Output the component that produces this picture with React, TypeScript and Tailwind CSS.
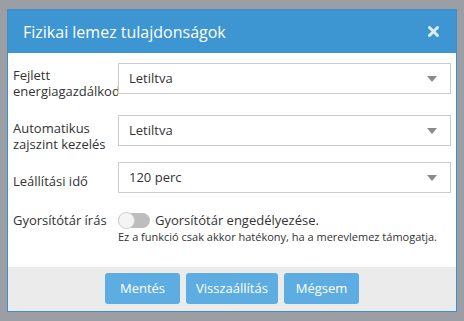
import React from "react";

const font = { fontFamily: '"Open Sans", "Noto Sans", sans-serif' };

function Select({ value }: { value: string }) {
  return (
    <div className="flex-1 h-[31px] border border-[#cccccc] bg-white flex items-center justify-between pl-[10px] pr-[13px] text-[13px] text-[#333]">
      <span>{value}</span>
      <svg width="10" height="6" viewBox="0 0 10 6">
        <path d="M0 0 L10 0 L5 6 Z" fill="#8a8a8a" />
      </svg>
    </div>
  );
}

const App = () => {
  return (
    <div className="w-[464px] h-[321px] bg-[#9b9ea2] pt-[9px] pl-[7px]" style={font}>
      <div className="w-[450px] h-[303px] border border-[#3b8fcc] flex flex-col bg-white">
        <div className="h-[43px] bg-[#3d95d1] flex items-center justify-between pl-[15px] pr-[17px]">
          <span className="text-white text-[16px]">Fizikai lemez tulajdonságok</span>
          <svg width="11" height="11" viewBox="0 0 11 11">
            <path d="M1.5 1.5 L9.5 9.5 M9.5 1.5 L1.5 9.5" stroke="#dcebf8" strokeWidth="3" strokeLinecap="round" />
          </svg>
        </div>

        <div className="h-[214px] px-[5px] pt-[10px] text-[13px] text-[#333]">
          <div className="flex items-start">
            <div className="w-[105px] overflow-hidden leading-[16px] mt-[4px]">Fejlett energiagazdálkodás</div>
            <Select value="Letiltva" />
          </div>
          <div className="flex items-start mt-[16px]">
            <div className="w-[105px] overflow-hidden leading-[16px] mt-[5px]">Automatikus zajszint kezelés</div>
            <Select value="Letiltva" />
          </div>
          <div className="flex items-start mt-[10px]">
            <div className="w-[105px] overflow-hidden leading-[16px] mt-[11px]">Leállítási idő</div>
            <Select value="120 perc" />
          </div>
          <div className="flex items-start mt-[19px]">
            <div className="w-[105px] leading-[16px]">Gyorsítótár írás</div>
            <div>
              <div className="flex items-center">
                <div className="w-[32px] h-[15px] rounded-full bg-[#bdbdbd] relative">
                  <div className="absolute left-0 top-[-1px] w-[17px] h-[17px] rounded-full bg-[#f4f4f4] border border-[#cfcfcf]" />
                </div>
                <span className="ml-[5px] leading-[16px]">Gyorsítótár engedélyezése.</span>
              </div>
              <div className="text-[11px] leading-[14px] mt-[2px]">
                Ez a funkció csak akkor hatékony, ha a merevlemez támogatja.
              </div>
            </div>
          </div>
        </div>

        <div className="h-[44px] bg-[#ebebeb] flex items-start justify-center gap-[6px] pt-[6px]">
          <button className="w-[75px] h-[31px] rounded-[3px] bg-[#5dade2] text-white text-[13px]">Mentés</button>
          <button className="w-[92px] h-[31px] rounded-[3px] bg-[#5dade2] text-white text-[13px]">Visszaállítás</button>
          <button className="w-[75px] h-[31px] rounded-[3px] bg-[#5dade2] text-white text-[13px]">Mégsem</button>
        </div>
      </div>
    </div>
  );
};

export default App;
